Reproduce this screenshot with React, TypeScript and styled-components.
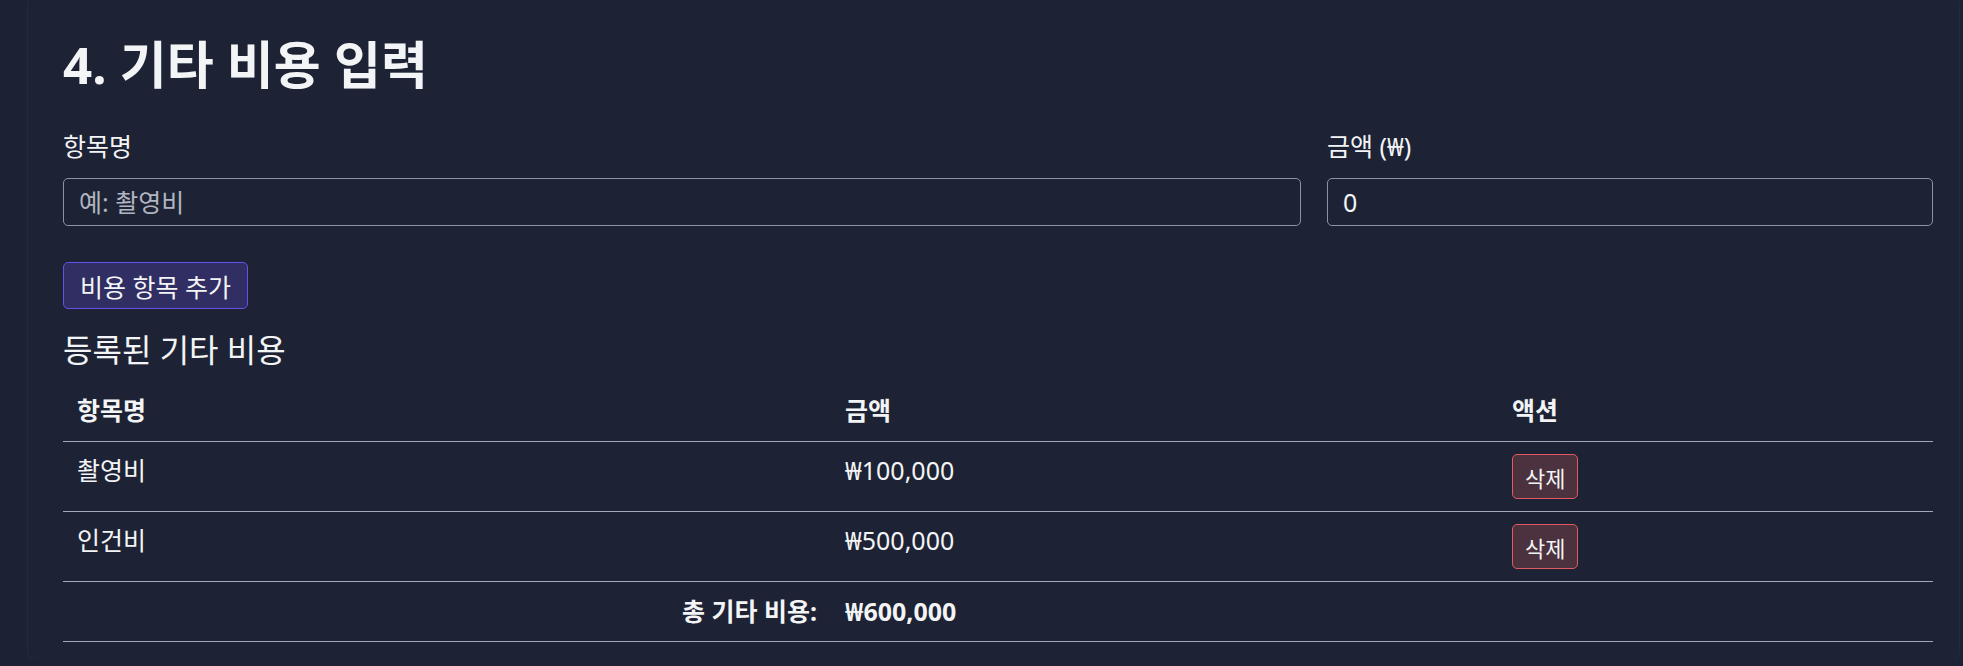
import React, { useState } from "react";
import styled, { createGlobalStyle } from "styled-components";

const GlobalStyle = createGlobalStyle`
    html, body {
        margin: 0;
        padding: 0;
        background: #1c2233;
    }
    body {
        font-family: "Noto Sans", "Noto Sans CJK KR", sans-serif;
        color: #f3f4f6;
    }
`;

const Page = styled.div`
    padding: 0 3px 0 27px;
`;

const Card = styled.section`
    margin-top: -8px;
    padding: 8px 26px 21px 35px;
    border: 1px solid #252b3c;
    border-bottom-color: #1d2334;
    border-radius: 14px;
    background: #1d2334;
`;

const Title = styled.h2`
    margin: 33px 0 34px;
    font-size: 51px;
    line-height: 1.2;
    font-weight: 700;
`;

const FormRow = styled.div`
    display: grid;
    grid-template-columns: 1fr 606px;
    column-gap: 26px;
`;

const Field = styled.div`
    display: flex;
    flex-direction: column;
`;

const Label = styled.label`
    font-size: 25px;
    line-height: 34px;
    margin-bottom: 15px;
`;

const Input = styled.input`
    box-sizing: border-box;
    height: 48px;
    padding: 0 15px;
    border: 1px solid #8a92a6;
    border-radius: 5px;
    background: transparent;
    color: #f3f4f6;
    font-family: inherit;
    font-size: 25px;
    outline: none;

    &::placeholder {
        color: #b0b5c1;
    }
`;

const AddButton = styled.button`
    margin-top: 36px;
    height: 47px;
    padding: 0 16px;
    border: 1px solid #6152ea;
    border-radius: 5px;
    background: #302e62;
    color: #f3f4f6;
    font-family: inherit;
    font-size: 25px;
`;

const SubTitle = styled.h3`
    margin: 21px 0 15px;
    font-size: 32px;
    line-height: 40px;
    font-weight: 400;
`;

const Table = styled.table`
    width: 100%;
    border-collapse: collapse;
    table-layout: fixed;
    font-size: 25px;
`;

const HeadCell = styled.th<{ $w?: number }>`
    width: ${(p) => (p.$w ? `${p.$w}px` : "auto")};
    text-align: left;
    font-weight: 700;
    padding: 10px 14px 16px;
    line-height: 30px;
    border-bottom: 1px solid #a3a9b7;
`;

const Cell = styled.td<{ $align?: "left" | "right"; $bold?: boolean }>`
    padding: 12px 14px;
    line-height: 32px;
    vertical-align: top;
    text-align: ${(p) => p.$align || "left"};
    font-weight: ${(p) => (p.$bold ? 700 : 400)};
    border-bottom: 1px solid #a3a9b7;
`;

const TotalCell = styled(Cell)`
    vertical-align: middle;
    padding: 13px 14px 14px;
`;

const DeleteButton = styled.button`
    height: 45px;
    padding: 0 12px;
    border: 1px solid #e05a5f;
    border-radius: 5px;
    background: #4c323e;
    color: #f3f4f6;
    font-family: inherit;
    font-size: 22px;
`;

const won = (n: number) => "₩" + n.toLocaleString("en-US");

export default function App() {
    const [items, setItems] = useState([
        { name: "촬영비", amount: 100000 },
        { name: "인건비", amount: 500000 },
    ]);
    const total = items.reduce((s, i) => s + i.amount, 0);

    return (
        <Page>
            <GlobalStyle />
            <Card>
                <Title>4. 기타 비용 입력</Title>
                <FormRow>
                    <Field>
                        <Label>항목명</Label>
                        <Input placeholder="예: 촬영비" />
                    </Field>
                    <Field>
                        <Label>금액 (₩)</Label>
                        <Input type="number" defaultValue={0} />
                    </Field>
                </FormRow>
                <AddButton>비용 항목 추가</AddButton>
                <SubTitle>등록된 기타 비용</SubTitle>
                <Table>
                    <thead>
                        <tr>
                            <HeadCell $w={740}>항목명</HeadCell>
                            <HeadCell $w={639}>금액</HeadCell>
                            <HeadCell>액션</HeadCell>
                        </tr>
                    </thead>
                    <tbody>
                        {items.map((item, x) => (
                            <tr key={x}>
                                <Cell>{item.name}</Cell>
                                <Cell>{won(item.amount)}</Cell>
                                <Cell>
                                    <DeleteButton
                                        onClick={() =>
                                            setItems(items.filter((_, i) => i !== x))
                                        }
                                    >
                                        삭제
                                    </DeleteButton>
                                </Cell>
                            </tr>
                        ))}
                    </tbody>
                    <tfoot>
                        <tr>
                            <TotalCell $align="right" $bold>
                                총 기타 비용:
                            </TotalCell>
                            <TotalCell $bold>{won(total)}</TotalCell>
                            <TotalCell />
                        </tr>
                    </tfoot>
                </Table>
            </Card>
        </Page>
    );
}
